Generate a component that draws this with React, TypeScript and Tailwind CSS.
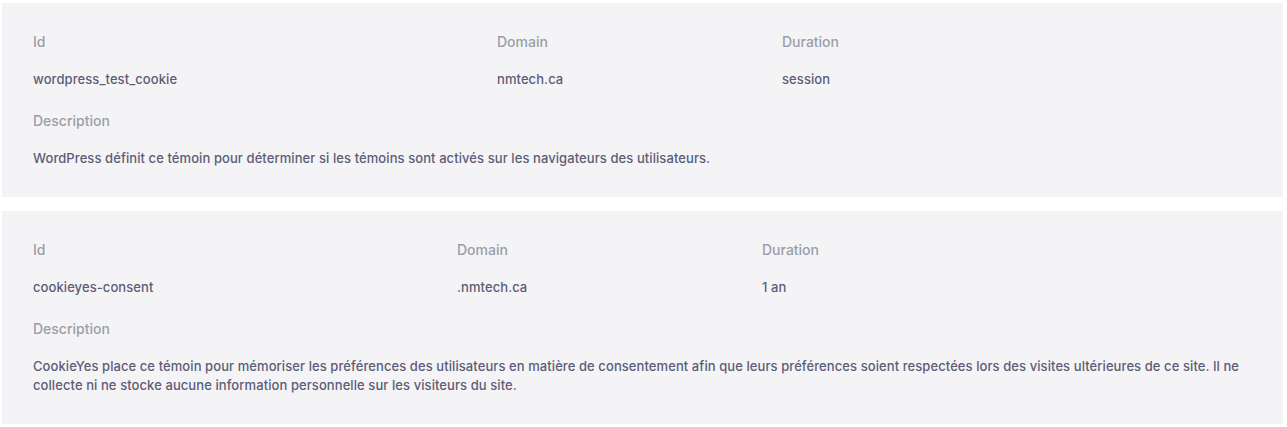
import React from "react";

type Cookie = { id: string; domain: string; duration: string; desc: string; c1: string; c2: string };

const cookies: Cookie[] = [
  {
    id: "wordpress_test_cookie",
    domain: "nmtech.ca",
    duration: "session",
    desc: "WordPress définit ce témoin pour déterminer si les témoins sont activés sur les navigateurs des utilisateurs.",
    c1: "w-[464px]",
    c2: "w-[285px]",
  },
  {
    id: "cookieyes-consent",
    domain: ".nmtech.ca",
    duration: "1 an",
    desc: "CookieYes place ce témoin pour mémoriser les préférences des utilisateurs en matière de consentement afin que leurs préférences soient respectées lors des visites ultérieures de ce site. Il ne collecte ni ne stocke aucune information personnelle sur les visiteurs du site.",
    c1: "w-[424px]",
    c2: "w-[305px]",
  },
];

function Panel({ c }: { c: Cookie }) {
  const label = "text-[14px] leading-[18px] font-medium text-[#9b9ea8]";
  const value = "text-[13px] leading-[18px] font-medium tracking-[0.08px] text-[#5c5c77]";
  return (
    <div className="bg-[#f4f4f6] pl-[31px] pr-[40px] pt-[30px] pb-[29px]">
      <div className="flex">
        <div className={c.c1 + " shrink-0"}>
          <div className={label}>Id</div>
          <div className={value + " mt-[19px]"}>{c.id}</div>
        </div>
        <div className={c.c2 + " shrink-0"}>
          <div className={label}>Domain</div>
          <div className={value + " mt-[19px]"}>{c.domain}</div>
        </div>
        <div>
          <div className={label}>Duration</div>
          <div className={value + " mt-[19px]"}>{c.duration}</div>
        </div>
      </div>
      <div className={label + " mt-[24px]"}>Description</div>
      <div className={value + " mt-[19px] leading-[19px]"}>{c.desc}</div>
    </div>
  );
}

export default function App() {
  return (
    <div className="bg-white w-[1287px] h-[427px] pt-[3px] pl-[2px] pr-[4px] font-['Inter',sans-serif]">
      <div className="flex flex-col gap-[14px]">
        {cookies.map((c) => (
          <Panel key={c.id} c={c} />
        ))}
      </div>
    </div>
  );
}
